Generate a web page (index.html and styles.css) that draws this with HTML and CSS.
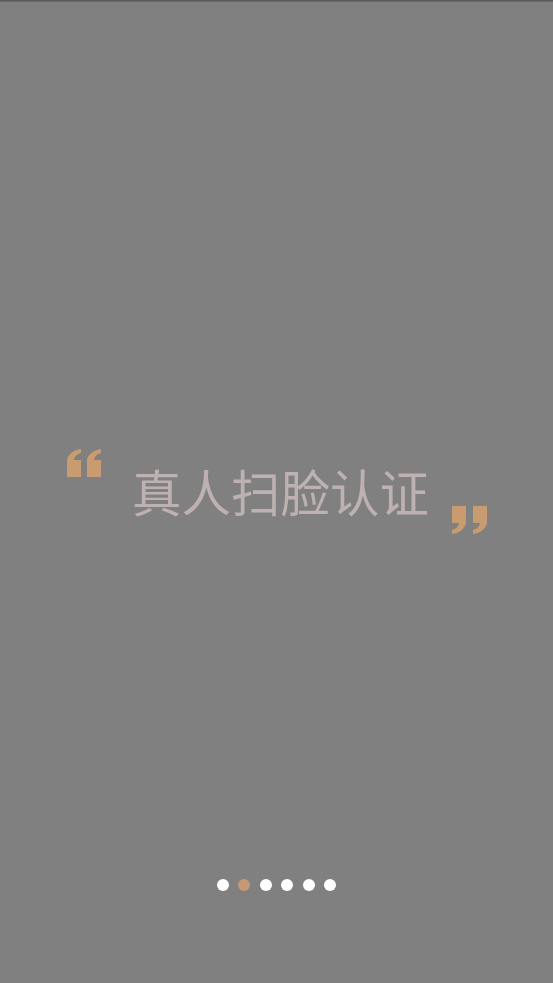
FILE: index.html
```html
<!DOCTYPE html>
<html lang="zh-CN">
<head>
<meta charset="utf-8">
<title>真人扫脸认证</title>
<link rel="stylesheet" href="styles.css">
</head>
<body>
<div class="screen">
  <div class="topbar"></div>
  <div class="hero">
    <svg class="quote quote-open" width="35" height="28" viewBox="0 0 35 28">
      <path d="M14 0 C7 1 1 5 0 11 L0 28 L14 28 L14 11 L7 11 C8 7 10 5 14 4 Z"/>
      <path transform="translate(20 0)" d="M14 0 C7 1 1 5 0 11 L0 28 L14 28 L14 11 L7 11 C8 7 10 5 14 4 Z"/>
    </svg>
    <div class="title">真人扫脸认证</div>
    <svg class="quote quote-close" width="36" height="30" viewBox="0 0 36 30">
      <g transform="rotate(180 18 15)">
        <path transform="translate(0 1)" d="M14 0 C7 1 1 5 0 11 L0 28 L14 28 L14 11 L7 11 C8 7 10 5 14 4 Z"/>
        <path transform="translate(21 1)" d="M14 0 C7 1 1 5 0 11 L0 28 L14 28 L14 11 L7 11 C8 7 10 5 14 4 Z"/>
      </g>
    </svg>
  </div>
  <div class="dots">
    <span class="dot"></span>
    <span class="dot active"></span>
    <span class="dot"></span>
    <span class="dot"></span>
    <span class="dot"></span>
    <span class="dot"></span>
  </div>
</div>
</body>
</html>
```
FILE: styles.css
```css
html, body {
  margin: 0;
  padding: 0;
  background: #808080;
}
.screen {
  width: 553px;
  height: 983px;
  display: flex;
  flex-direction: column;
  background: #808080;
  overflow: hidden;
}
.topbar {
  height: 2px;
  background: linear-gradient(#555555, #6e6e6e);
}
.hero {
  display: flex;
  align-items: flex-start;
  margin-top: 447px;
  padding-left: 67px;
}
.quote {
  fill: #c89b70;
  flex: none;
}
.title {
  margin-left: 30px;
  margin-top: 12px;
  font-family: "Noto Sans CJK SC", "Noto Sans", sans-serif;
  font-size: 49.5px;
  line-height: 60px;
  color: #bdb1b1;
  white-space: nowrap;
}
.quote-close {
  margin-left: 22px;
  margin-top: 56px;
}
.dots {
  display: flex;
  gap: 9.5px;
  margin-top: auto;
  margin-bottom: 92px;
  padding-left: 216.5px;
}
.dot {
  width: 12px;
  height: 12px;
  border-radius: 50%;
  background: #ffffff;
}
.dot.active {
  background: #c49a74;
}
```
